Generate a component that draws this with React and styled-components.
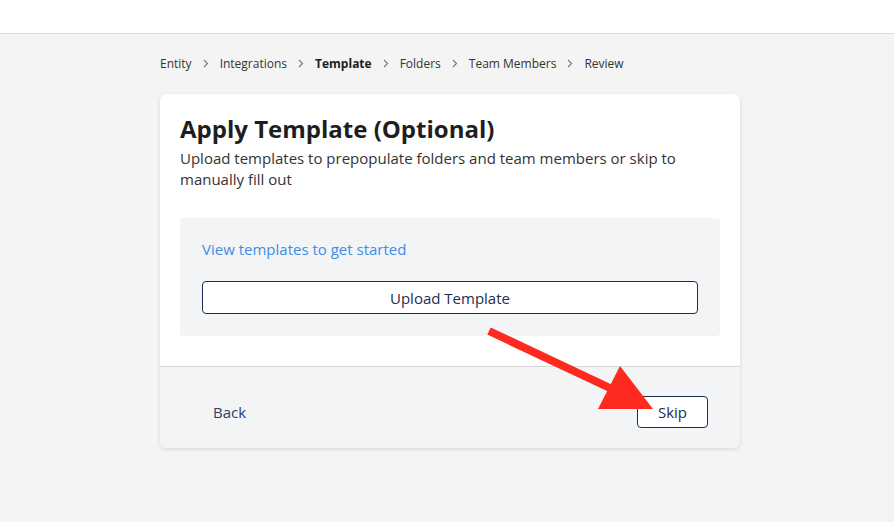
import styled, { createGlobalStyle } from 'styled-components';

const GlobalStyle = createGlobalStyle`
    html, body {
        margin: 0;
        padding: 0;
        background: #f4f4f4;
        font-family: "Open Sans", "Noto Sans", sans-serif;
    }
    #root {
        min-height: 522px;
    }
`;

const Page = styled.div`
    position: relative;
    min-height: 522px;
    background: #f4f4f4;
`;

const TopBar = styled.header`
    height: 33px;
    background: #ffffff;
    border-bottom: 1px solid #d9d9d9;
`;

const Content = styled.main`
    width: 580px;
    margin: 0 auto;
    padding-top: 19px;
    transform: translateX(3px);
`;

const Crumbs = styled.nav`
    display: flex;
    align-items: center;
    gap: 11px;
    height: 20px;
    font-size: 12px;
    color: #2b2b2b;
    margin-bottom: 21px;
`;

const Crumb = styled.span`
    font-weight: ${p => (p.$active ? 700 : 400)};
    color: ${p => (p.$active ? '#1d1d1d' : '#333')};
`;

const Card = styled.section`
    background: #ffffff;
    border-radius: 6px;
    box-shadow: 0 1px 4px rgba(0, 0, 0, 0.12);
    overflow: hidden;
`;

const CardBody = styled.div`
    padding: 18px 20px 30px 20px;
    border-bottom: 1px solid #d8d8d8;
`;

const Title = styled.h1`
    margin: 0;
    font-size: 24px;
    line-height: 34px;
    font-weight: 700;
    color: #1e1e1e;
`;

const Subtitle = styled.p`
    margin: 2px 0 0 0;
    font-size: 15px;
    line-height: 21px;
    color: #333;
    padding-right: 40px;
`;

const TemplateBox = styled.div`
    margin-top: 28px;
    background: #f3f4f6;
    border-radius: 4px;
    padding: 20px 22px 22px 22px;
    display: flex;
    flex-direction: column;
`;

const Link = styled.a`
    font-size: 15px;
    line-height: 22px;
    color: #3f8ee4;
    text-decoration: none;
    cursor: pointer;
`;

const OutlineButton = styled.button`
    font-family: inherit;
    font-size: 15px;
    color: #1c2f52;
    background: #ffffff;
    border: 1px solid #1c2f52;
    border-radius: 4px;
    height: ${p => p.$h || 32}px;
    padding: 0 20px;
    cursor: pointer;
    width: ${p => (p.$full ? '100%' : 'auto')};
    margin-top: ${p => p.$mt || 0}px;
`;

const TextButton = styled.button`
    font-family: inherit;
    font-size: 15px;
    color: #2a3f66;
    background: transparent;
    border: 1px solid transparent;
    height: 32px;
    padding: 0 20px;
    cursor: pointer;
`;

const Footer = styled.div`
    background: #f3f4f6;
    height: 81px;
    padding: 8px 32px 0 32px;
    display: flex;
    align-items: center;
    justify-content: space-between;
    box-sizing: border-box;
`;

const Annotation = styled.svg`
    position: absolute;
    left: 0;
    top: 0;
    pointer-events: none;
`;

function Chevron() {
    return (
        <svg width="6" height="9" viewBox="0 0 6 9">
            <path d="M1 1l3.5 3.5L1 8" fill="none" stroke="#777" strokeWidth="1.1" />
        </svg>
    );
}

const steps = ['Entity', 'Integrations', 'Template', 'Folders', 'Team Members', 'Review'];

export default function App() {
    return (
        <Page>
            <GlobalStyle />
            <TopBar />
            <Content>
                <Crumbs>
                    {steps.map((s, i) => [
                        i > 0 && <Chevron key={'c' + i} />,
                        <Crumb key={s} $active={s === 'Template'}>{s}</Crumb>
                    ])}
                </Crumbs>
                <Card>
                    <CardBody>
                        <Title>Apply Template (Optional)</Title>
                        <Subtitle>
                            Upload templates to prepopulate folders and team members or skip to manually fill out
                        </Subtitle>
                        <TemplateBox>
                            <Link>View templates to get started</Link>
                            <OutlineButton $full $mt={21} $h={33}>Upload Template</OutlineButton>
                        </TemplateBox>
                    </CardBody>
                    <Footer>
                        <TextButton>Back</TextButton>
                        <OutlineButton>Skip</OutlineButton>
                    </Footer>
                </Card>
            </Content>
            <Annotation width="894" height="522" viewBox="0 0 894 522">
                <line x1="489" y1="331" x2="612" y2="389" stroke="#ff2a1f" strokeWidth="8" />
                <polygon points="653,409 620,366 598,409" fill="#ff2a1f" />
            </Annotation>
        </Page>
    );
}
